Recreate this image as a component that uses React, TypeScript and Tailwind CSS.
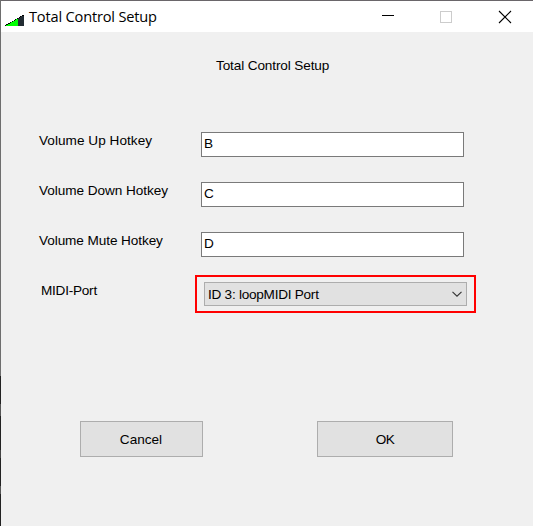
import { useState } from "react";

function SignalIcon() {
  return (
    <svg width="19" height="12" viewBox="0 0 19 12" shapeRendering="crispEdges">
      <path d="M0 11L19 0V11H0Z" fill="#00ff00" />
      <path d="M13 3.4L19 0V11H13Z" fill="#222c33" />
      <path d="M0 10.5H1M1 9.5H3M3 8.5H5M5 7.5H6M7 6.5H8M9 5.5H10M10 4.5H11M12 3.5H13M14 2.5H15M15 1.5H16M17 .5H19" stroke="#000" />
    </svg>
  );
}

function TitleBar() {
  return (
    <header className="flex h-[31px] bg-white">
      <div className="ml-1 mt-[14px] h-3 w-[19px]">
        <SignalIcon />
      </div>
      <span className="ml-[5px] w-[353px] whitespace-nowrap font-['Open_Sans',sans-serif] text-[14.6px] leading-[31px] tracking-[-0.18px]">
        Total Control Setup
      </span>
      <button aria-label="Minimize" className="mt-2 h-4 w-[14px]">
        <svg width="14" height="16" shapeRendering="crispEdges">
          <path d="M0 6.5H12" stroke="#000" />
        </svg>
      </button>
      <button aria-label="Maximize" className="ml-[43px] mt-2 h-4 w-[14px]">
        <svg width="14" height="14" shapeRendering="crispEdges">
          <path d="M1.5 1.5H12.5V12.5H1.5Z" fill="none" stroke="#ccc" />
        </svg>
      </button>
      <button aria-label="Close" className="ml-[45px] mt-2 h-4 w-[14px]">
        <svg width="14" height="14">
          <path d="M1 1L13 13M13 1L1 13" stroke="#000" strokeWidth="1.1" />
        </svg>
      </button>
    </header>
  );
}

function HotkeyRow({ label, initial, tracking }: { label: string; initial: string; tracking: string }) {
  const [value, setValue] = useState(initial);
  return (
    <label className="flex h-[50px]">
      <span className={`ml-[38px] w-[162px] whitespace-nowrap leading-[17px] ${tracking}`}>{label}</span>
      <input
        value={value}
        onChange={(e) => setValue(e.target.value)}
        className="h-[25px] w-[263px] border border-[#7a7a7a] bg-white pb-[3px] pl-[2px] outline-none"
      />
    </label>
  );
}

const buttonClass = "h-9 border border-[#adadad] bg-[#e1e1e1] pt-[3px] text-center";

export default function App() {
  return (
    <div className="flex h-[526px] w-[533px] overflow-hidden bg-[#f0f0f0] font-['Liberation_Sans',Arial,sans-serif] text-[13.6px] text-black">
      <div className="flex w-px flex-col">
        <div className="h-[376px] bg-[#6e6e6e]" />
        <div className="h-7 bg-[#222]" />
        <div className="h-3 bg-[#555]" />
        <div className="h-[34px] bg-[#222]" />
        <div className="h-2 bg-[#444]" />
        <div className="h-7 bg-[#222]" />
        <div className="h-2 bg-[#555]" />
        <div className="flex-1 bg-[#222]" />
      </div>
      <div className="w-[532px]">
        <div className="h-px bg-[#6a666a]" />
        <TitleBar />
        <main>
          <h1 className="ml-[215px] mt-[25px] h-[18px] whitespace-nowrap leading-[17px] tracking-[-0.13px]">
            Total Control Setup
          </h1>
          <div className="pt-[57px]">
            <HotkeyRow label="Volume Up Hotkey" initial="B" tracking="tracking-[0.03px]" />
            <HotkeyRow label="Volume Down Hotkey" initial="C" tracking="tracking-[-0.06px]" />
            <HotkeyRow label="Volume Mute Hotkey" initial="D" tracking="tracking-[-0.09px]" />
            <div className="flex h-[50px]">
              <span className="ml-10 w-[154px] leading-[17px] tracking-[-0.25px]">MIDI-Port</span>
              <div className="-mt-[7px] h-[38px] w-[281px] border-2 border-[#ff0000] pl-[7px] pt-[5px]">
                <button className="flex h-6 w-[263px] items-center border border-[#adadad] bg-[#e1e1e1] pl-[3px]">
                  <span className="w-[243px] pt-[2px] text-left leading-5 tracking-[-0.26px]">ID 3: loopMIDI Port</span>
                  <svg width="12" height="8" viewBox="0 0 12 8">
                    <path d="M1.5 1.8L6 6.2L10.5 1.8" fill="none" stroke="#333" strokeWidth="1.1" />
                  </svg>
                </button>
              </div>
            </div>
          </div>
          <div className="flex pl-[79px] pt-[89px]">
            <button className={`${buttonClass} w-[123px] pr-px`}>Cancel</button>
            <button className={`${buttonClass} ml-[114px] w-[136px] tracking-[-0.6px]`}>OK</button>
          </div>
        </main>
      </div>
    </div>
  );
}
